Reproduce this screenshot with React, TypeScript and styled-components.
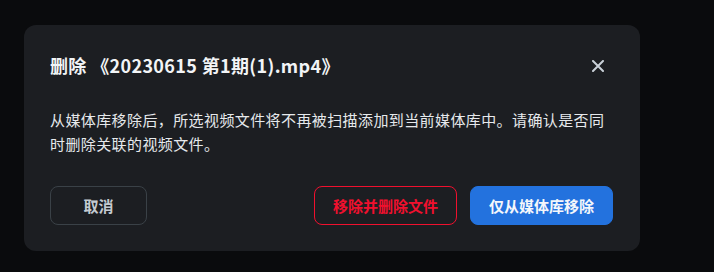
import React from 'react';
import styled, { createGlobalStyle } from 'styled-components';

const GlobalStyle = createGlobalStyle`
  html, body {
    margin: 0;
    padding: 0;
    background: #0a0b0d;
    font-family: "Noto Sans CJK SC", "Noto Sans", sans-serif;
  }
`;

const Page = styled.div`
  width: 714px;
  height: 272px;
  padding: 25px 0 0 24px;
  box-sizing: border-box;
`;

const Dialog = styled.div`
  width: 616px;
  height: 226px;
  box-sizing: border-box;
  padding: 26px 27px 26px 26px;
  background: #1c1e22;
  border-radius: 12px;
  display: flex;
  flex-direction: column;
`;

const Header = styled.div`
  display: flex;
  align-items: center;
  justify-content: space-between;
  height: 28px;
`;

const Title = styled.h2`
  margin: 0;
  font-size: 18px;
  line-height: 28px;
  letter-spacing: 0.35px;
  font-weight: 700;
  color: #f2f4f6;
`;

const CloseButton = styled.button`
  width: 24px;
  height: 24px;
  margin-right: 3px;
  margin-top: 1px;
  padding: 0;
  border: none;
  background: transparent;
  display: flex;
  align-items: center;
  justify-content: center;
  cursor: pointer;
`;

const Body = styled.p`
  margin: 29px 0 0;
  font-size: 15px;
  line-height: 24px;
  letter-spacing: 0.4px;
  color: #e6e9ec;
`;

const Footer = styled.div`
  margin-top: auto;
  display: flex;
  align-items: center;
  gap: 13px;
`;

const Spacer = styled.div`
  flex: 1;
`;

const Button = styled.button<{ $variant: 'ghost' | 'danger' | 'primary' }>`
  height: 39px;
  box-sizing: border-box;
  padding: 0;
  width: ${(p) => (p.$variant === 'ghost' ? '97px' : '143px')};
  border-radius: 8px;
  font-family: inherit;
  font-size: 15px;
  font-weight: 700;
  cursor: pointer;
  border: 1px solid
    ${(p) =>
      p.$variant === 'ghost' ? '#3a4147' : p.$variant === 'danger' ? '#f0102e' : '#2372de'};
  background: ${(p) => (p.$variant === 'primary' ? '#2372de' : 'transparent')};
  color: ${(p) =>
    p.$variant === 'ghost' ? '#c4cad1' : p.$variant === 'danger' ? '#f0102e' : '#f4f7fb'};
`;

export default function App() {
  return (
    <Page>
      <GlobalStyle />
      <Dialog>
        <Header>
          <Title>删除 《20230615 第1期(1).mp4》</Title>
          <CloseButton aria-label="关闭">
            <svg width="12" height="12" viewBox="0 0 12 12">
              <path d="M1 1L11 11M11 1L1 11" stroke="#c9d0d8" strokeWidth="2" strokeLinecap="round" />
            </svg>
          </CloseButton>
        </Header>
        <Body>
          从媒体库移除后，所选视频文件将不再被扫描添加到当前媒体库中。请确认是否同时删除关联的视频文件。
        </Body>
        <Footer>
          <Button $variant="ghost">取消</Button>
          <Spacer />
          <Button $variant="danger">移除并删除文件</Button>
          <Button $variant="primary">仅从媒体库移除</Button>
        </Footer>
      </Dialog>
    </Page>
  );
}
